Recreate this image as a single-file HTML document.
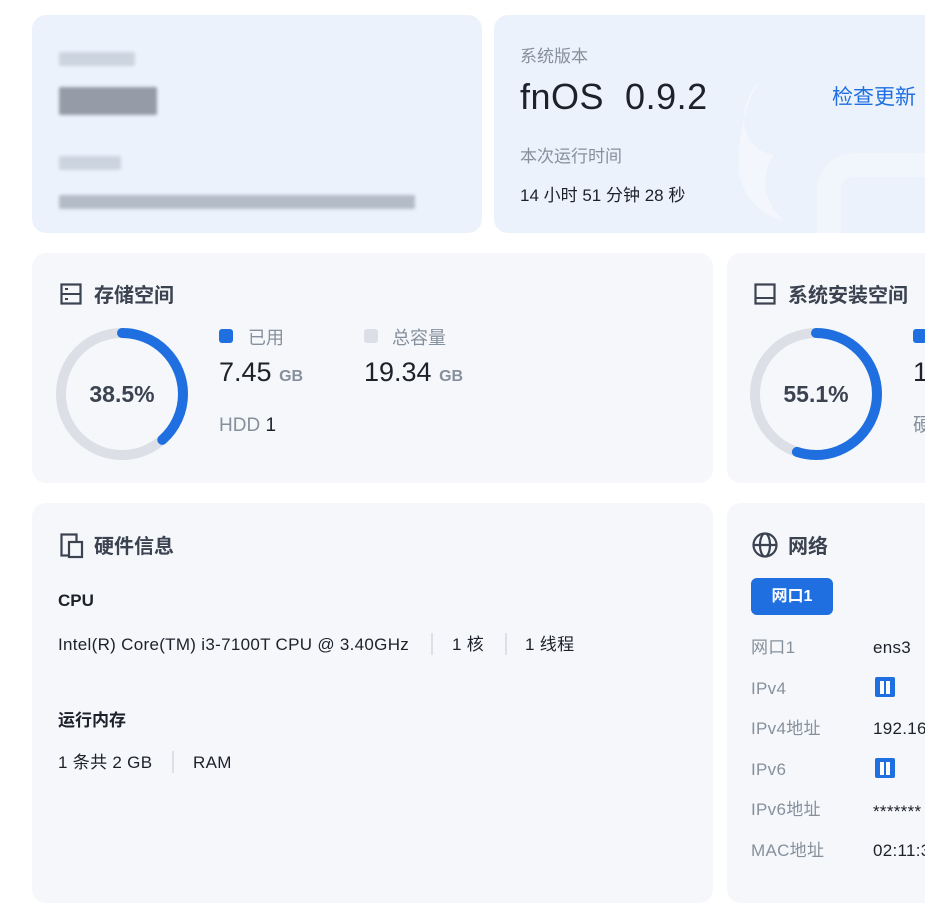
<!DOCTYPE html>
<html><head><meta charset="utf-8"><style>
*{margin:0;padding:0;box-sizing:border-box}
body{width:925px;height:877px;overflow:hidden;background:#fff;font-family:"Liberation Sans","Noto Sans CJK SC",sans-serif;color:#1d2129;position:relative}
.card{position:absolute;border-radius:14px;background:#f5f7fb;overflow:hidden}
.top{background:#ebf2fc}
.a{position:absolute;white-space:nowrap;line-height:1.3}
.blur{position:absolute;background:#c5cdd9;filter:blur(1.5px);border-radius:2px}
.gray{color:#86909c}
.h{font-size:20px;font-weight:bold;color:#3b4250}
.t{font-size:17px;letter-spacing:.3px}
</style></head><body>
<div class="card top" style="left:32px;top:15px;width:450px;height:218px">
 <div class="blur" style="left:27px;top:37px;width:76px;height:14px;opacity:.8"></div>
 <div class="blur" style="left:27px;top:72px;width:98px;height:28px;background:#959ca8"></div>
 <div class="blur" style="left:27px;top:141px;width:62px;height:14px;opacity:.8"></div>
 <div class="blur" style="left:27px;top:180px;width:356px;height:14px;background:#b4bcc8"></div>
</div>
<div class="card top" style="left:494px;top:15px;width:445px;height:218px">
 <svg class="a" style="left:240px;top:60px" width="200" height="160"><path d="M28 4 C0 30 5 75 40 80 C25 100 30 130 50 145 C20 140 0 110 5 75 C8 45 15 20 28 4Z" fill="#f3f7fd"/><rect x="95" y="90" width="150" height="120" rx="25" fill="none" stroke="#f1f6fd" stroke-width="24"/></svg>
 <div class="a gray" style="left:26px;top:31px;font-size:17px">系统版本</div>
 <div class="a" style="left:26px;top:59px;font-size:36px;font-weight:500;color:#1d2129;letter-spacing:.5px">fnOS&nbsp;&nbsp;0.9.2</div>
 <div class="a" style="left:338px;top:69px;font-size:21px;color:#1f6fe0">检查更新</div>
 <div class="a gray" style="left:26px;top:131px;font-size:17px">本次运行时间</div>
 <div class="a" style="left:26px;top:170px;font-size:17px">14 小时 51 分钟 28 秒</div>
</div>
<div class="card" style="left:32px;top:253px;width:681px;height:230px">
 <svg class="a" style="left:28px;top:30px" width="22" height="22"><rect x="1.5" y="1.5" width="19" height="19" fill="none" stroke="#3b4250" stroke-width="2.2"/><line x1="1.5" y1="11" x2="20.5" y2="11" stroke="#3b4250" stroke-width="2"/><line x1="5" y1="6" x2="8" y2="6" stroke="#3b4250" stroke-width="2"/><line x1="5" y1="16" x2="8" y2="16" stroke="#3b4250" stroke-width="2"/></svg>
 <div class="a h" style="left:62px;top:30px">存储空间</div>
 <svg class="a" style="left:24px;top:75px" width="132" height="132"><circle cx="66" cy="66" r="61" fill="none" stroke="#dce0e6" stroke-width="10"/><circle cx="66" cy="66" r="61" fill="none" stroke="#1f6fe0" stroke-width="10" stroke-linecap="round" stroke-dasharray="147.6 400" transform="rotate(-90 66 66)"/></svg>
 <div class="a" style="left:24px;top:127px;width:132px;text-align:center;font-size:23px;font-weight:bold;color:#3b4250">38.5%</div>
 <div class="a" style="left:187px;top:76px;width:14px;height:14px;border-radius:3px;background:#1f6fe0"></div>
 <div class="a gray" style="left:216px;top:74px;font-size:18px">已用</div>
 <div class="a" style="left:187px;top:102px;font-size:27px;font-weight:500">7.45 <span style="font-size:16px;color:#86909c;font-weight:bold">GB</span></div>
 <div class="a" style="left:332px;top:76px;width:14px;height:14px;border-radius:3px;background:#dce0e6"></div>
 <div class="a gray" style="left:360px;top:74px;font-size:18px">总容量</div>
 <div class="a" style="left:332px;top:102px;font-size:27px;font-weight:500">19.34 <span style="font-size:16px;color:#86909c;font-weight:bold">GB</span></div>
 <div class="a" style="left:187px;top:161px;font-size:19px;color:#86909c">HDD <span style="color:#1d2129">1</span></div>
</div>
<div class="card" style="left:727px;top:253px;width:220px;height:230px">
 <svg class="a" style="left:27px;top:30px" width="22" height="22"><rect x="1.5" y="1.5" width="19" height="19" fill="none" stroke="#3b4250" stroke-width="2.2"/><line x1="1.5" y1="15" x2="20.5" y2="15" stroke="#3b4250" stroke-width="2"/></svg>
 <div class="a h" style="left:61px;top:30px">系统安装空间</div>
 <svg class="a" style="left:23px;top:75px" width="132" height="132"><circle cx="66" cy="66" r="61" fill="none" stroke="#dce0e6" stroke-width="10"/><circle cx="66" cy="66" r="61" fill="none" stroke="#1f6fe0" stroke-width="10" stroke-linecap="round" stroke-dasharray="211 400" transform="rotate(-90 66 66)"/></svg>
 <div class="a" style="left:23px;top:127px;width:132px;text-align:center;font-size:23px;font-weight:bold;color:#3b4250">55.1%</div>
 <div class="a" style="left:186px;top:76px;width:14px;height:14px;border-radius:3px;background:#1f6fe0"></div>
 <div class="a" style="left:186px;top:102px;font-size:27px;font-weight:500">1</div>
 <div class="a gray" style="left:186px;top:161px;font-size:19px">硬</div>
</div>
<div class="card" style="left:32px;top:503px;width:681px;height:400px">
 <svg class="a" style="left:28px;top:30px" width="24" height="26"><rect x="1.5" y="1.5" width="15" height="21" fill="none" stroke="#3b4250" stroke-width="2.2"/><rect x="9" y="9" width="13" height="15" fill="#f5f7fb" stroke="#3b4250" stroke-width="2.2"/></svg>
 <div class="a h" style="left:62px;top:31px">硬件信息</div>
 <div class="a" style="left:26px;top:87px;font-size:17px;font-weight:bold">CPU</div>
 <div class="a t" style="left:26px;top:131px">Intel(R) Core(TM) i3-7100T CPU @ 3.40GHz</div>
 <div class="a" style="left:399px;top:130px;width:2px;height:22px;background:#dde1e7"></div>
 <div class="a t" style="left:420px;top:131px">1 核</div>
 <div class="a" style="left:473px;top:130px;width:2px;height:22px;background:#dde1e7"></div>
 <div class="a t" style="left:493px;top:131px">1 线程</div>
 <div class="a" style="left:26px;top:207px;font-size:17px;font-weight:bold">运行内存</div>
 <div class="a t" style="left:26px;top:249px">1 条共 2 GB</div>
 <div class="a" style="left:140px;top:248px;width:2px;height:22px;background:#dde1e7"></div>
 <div class="a t" style="left:161px;top:249px">RAM</div>
</div>
<div class="card" style="left:727px;top:503px;width:220px;height:400px">
 <svg class="a" style="left:24px;top:28px" width="28" height="28"><circle cx="14" cy="14" r="11.5" fill="none" stroke="#3b4250" stroke-width="2.2"/><ellipse cx="14" cy="14" rx="5" ry="11.5" fill="none" stroke="#3b4250" stroke-width="2.2"/><line x1="2.5" y1="14" x2="25.5" y2="14" stroke="#3b4250" stroke-width="2.2"/></svg>
 <div class="a h" style="left:61px;top:31px">网络</div>
 <div class="a" style="left:24px;top:75px;width:82px;height:37px;border-radius:6px;background:#1f6fe0;color:#fff;font-weight:bold;font-size:16px;text-align:center;line-height:37px">网口1</div>
 <div class="a gray t" style="left:24px;top:134px">网口1</div><div class="a t" style="left:146px;top:134px">ens3</div>
 <div class="a gray t" style="left:24px;top:175px">IPv4</div>
 <div class="a" style="left:148px;top:174px;width:20px;height:20px;border-radius:2px;background:#1f6fe0"><div class="a" style="left:5px;top:4px;width:4px;height:13px;background:#fff"></div><div class="a" style="left:11px;top:4px;width:4px;height:13px;background:#fff"></div></div>
 <div class="a gray t" style="left:24px;top:215px">IPv4地址</div><div class="a t" style="left:146px;top:215px">192.16</div>
 <div class="a gray t" style="left:24px;top:256px">IPv6</div>
 <div class="a" style="left:148px;top:255px;width:20px;height:20px;border-radius:2px;background:#1f6fe0"><div class="a" style="left:5px;top:4px;width:4px;height:13px;background:#fff"></div><div class="a" style="left:11px;top:4px;width:4px;height:13px;background:#fff"></div></div>
 <div class="a gray t" style="left:24px;top:296px">IPv6地址</div><div class="a t" style="left:146px;top:298px">*******</div>
 <div class="a gray t" style="left:24px;top:337px">MAC地址</div><div class="a t" style="left:146px;top:337px">02:11:3</div>
</div>
</body></html>
